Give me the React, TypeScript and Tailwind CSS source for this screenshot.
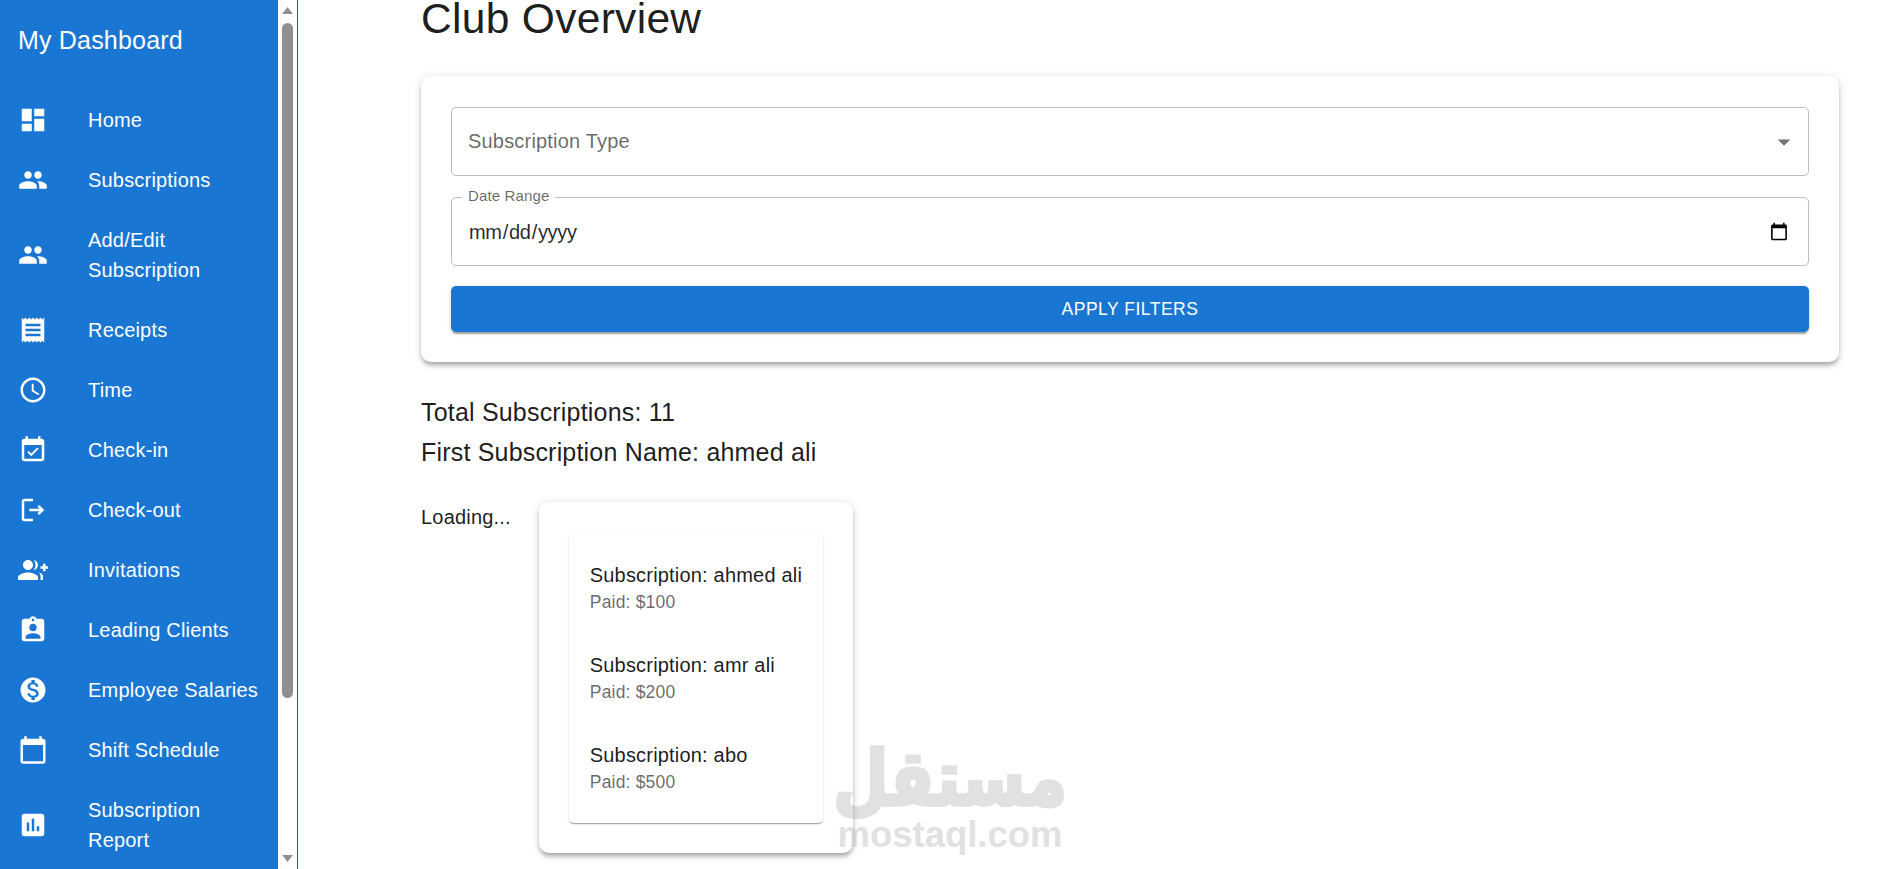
const icons = {
  dashboard: "M3 13h8V3H3v10zm0 8h8v-6H3v6zm10 0h8V11h-8v10zm0-18v6h8V3h-8z",
  people:
    "M16 11c1.66 0 2.99-1.34 2.99-3S17.66 5 16 5c-1.66 0-3 1.34-3 3s1.34 3 3 3zm-8 0c1.66 0 2.99-1.34 2.99-3S9.66 5 8 5C6.34 5 5 6.34 5 8s1.34 3 3 3zm0 2c-2.33 0-7 1.17-7 3.5V19h14v-2.5c0-2.33-4.67-3.5-7-3.5zm8 0c-.29 0-.62.02-.97.05 1.16.84 1.97 1.97 1.97 3.45V19h6v-2.5c0-2.33-4.67-3.5-7-3.5z",
  receipt:
    "M18 17H6v-2h12v2zm0-4H6v-2h12v2zm0-4H6V7h12v2zM3 22l1.5-1.5L6 22l1.5-1.5L9 22l1.5-1.5L12 22l1.5-1.5L15 22l1.5-1.5L18 22l1.5-1.5L21 22V2l-1.5 1.5L18 2l-1.5 1.5L15 2l-1.5 1.5L12 2l-1.5 1.5L9 2 7.5 3.5 6 2 4.5 3.5 3 2v20z",
  time: "M11.99 2C6.47 2 2 6.48 2 12s4.47 10 9.99 10C17.52 22 22 17.52 22 12S17.52 2 11.99 2zM12 20c-4.42 0-8-3.58-8-8s3.58-8 8-8 8 3.58 8 8-3.58 8-8 8zM12.5 7H11v6l5.25 3.15.75-1.23-4.5-2.67z",
  checkin:
    "M16.53 11.06 15.47 10l-4.88 4.88-2.12-2.12-1.06 1.06L10.59 17l5.94-5.94zM19 3h-1V1h-2v2H8V1H6v2H5c-1.11 0-1.99.9-1.99 2L3 19c0 1.1.89 2 2 2h14c1.1 0 2-.9 2-2V5c0-1.1-.9-2-2-2zm0 16H5V8h14v11z",
  checkout:
    "m17 8-1.41 1.41L17.17 11H9v2h8.17l-1.58 1.58L17 16l4-4-4-4zM5 5h7V3H5c-1.1 0-2 .9-2 2v14c0 1.1.9 2 2 2h7v-2H5V5z",
  invite:
    "M22 9V7h-2v2h-2v2h2v2h2v-2h2V9zM8 12c2.21 0 4-1.79 4-4s-1.79-4-4-4-4 1.79-4 4 1.79 4 4 4zm0 2c-2.67 0-8 1.34-8 4v2h16v-2c0-2.66-5.33-4-8-4zM12.51 4.05C13.43 5.11 14 6.49 14 8s-.57 2.89-1.49 3.95C14.47 11.7 16 10.04 16 8s-1.53-3.7-3.49-3.95zM16.53 13.83C17.42 14.66 18 15.7 18 17v3h2v-3c0-1.45-1.59-2.51-3.47-3.17z",
  clients:
    "M19 3h-4.18C14.4 1.84 13.3 1 12 1c-1.3 0-2.4.84-2.82 2H5c-1.1 0-2 .9-2 2v14c0 1.1.9 2 2 2h14c1.1 0 2-.9 2-2V5c0-1.1-.9-2-2-2zm-7 0c.55 0 1 .45 1 1s-.45 1-1 1-1-.45-1-1 .45-1 1-1zm0 4c1.66 0 3 1.34 3 3s-1.34 3-3 3-3-1.34-3-3 1.34-3 3-3zm6 12H6v-1.4c0-2 4-3.1 6-3.1s6 1.1 6 3.1V19z",
  money:
    "M12 2C6.48 2 2 6.48 2 12s4.48 10 10 10 10-4.48 10-10S17.52 2 12 2zm1.41 16.09V20h-2.67v-1.93c-1.71-.36-3.16-1.46-3.27-3.4h1.96c.1 1.05.82 1.87 2.65 1.87 1.96 0 2.4-.98 2.4-1.59 0-.83-.44-1.61-2.67-2.14-2.48-.6-4.18-1.62-4.18-3.67 0-1.72 1.39-2.84 3.11-3.21V4h2.67v1.95c1.86.45 2.79 1.86 2.85 3.39H14.3c-.05-1.11-.64-1.87-2.22-1.87-1.5 0-2.4.68-2.4 1.64 0 .84.65 1.39 2.67 1.91s4.18 1.39 4.18 3.91c-.01 1.83-1.38 2.83-3.12 3.16z",
  calendar:
    "M20 3h-1V1h-2v2H7V1H5v2H4c-1.1 0-2 .9-2 2v16c0 1.1.9 2 2 2h16c1.1 0 2-.9 2-2V5c0-1.1-.9-2-2-2zm0 18H4V8h16v13z",
  report:
    "M19 3H5c-1.1 0-2 .9-2 2v14c0 1.1.9 2 2 2h14c1.1 0 2-.9 2-2V5c0-1.1-.9-2-2-2zM9 17H7v-7h2v7zm4 0h-2V7h2v10zm4 0h-2v-4h2v4z",
};

const navItems = [
  { label: "Home", icon: icons.dashboard },
  { label: "Subscriptions", icon: icons.people },
  { label: "Add/Edit Subscription", icon: icons.people },
  { label: "Receipts", icon: icons.receipt },
  { label: "Time", icon: icons.time },
  { label: "Check-in", icon: icons.checkin },
  { label: "Check-out", icon: icons.checkout },
  { label: "Invitations", icon: icons.invite },
  { label: "Leading Clients", icon: icons.clients },
  { label: "Employee Salaries", icon: icons.money },
  { label: "Shift Schedule", icon: icons.calendar },
  { label: "Subscription Report", icon: icons.report },
];

const payments = [
  { name: "ahmed ali", paid: 100 },
  { name: "amr ali", paid: 200 },
  { name: "abo", paid: 500 },
];

const Sidebar = () => (
  <aside className="flex h-[869px] shrink-0 border-r border-[#2c5c9c]">
    <div className="w-[278px] overflow-hidden bg-[#1976d2] text-white">
      <h6 className="h-[90px] pl-[18px] pt-[22px] text-[25px] leading-[37px] tracking-[0.19px]">My Dashboard</h6>
      <ul>
        {navItems.map((item) => (
          <li key={item.label} className="flex items-center py-[15px] pl-[18px] pr-[15px]">
            <svg viewBox="0 0 24 24" className="h-[30px] w-[30px] shrink-0 fill-white">
              <path d={item.icon} />
            </svg>
            <span className="ml-[40px] text-[20px] leading-[30px] tracking-[0.19px]">{item.label}</span>
          </li>
        ))}
      </ul>
    </div>
    <div className="relative w-[19px] bg-white">
      <svg viewBox="0 0 14 10" className="absolute left-[3px] top-[6px] h-[9px] w-[13px] fill-[#8f8f8f]">
        <path d="M7 1 13 9H1z" />
      </svg>
      <div className="absolute left-[4px] top-[23px] h-[675px] w-[11px] rounded-full bg-[#8f8f8f]" />
      <svg viewBox="0 0 14 10" className="absolute bottom-[6px] left-[3px] h-[9px] w-[13px] fill-[#8f8f8f]">
        <path d="M1 1h12L7 9z" />
      </svg>
    </div>
  </aside>
);

const FilterCard = () => (
  <section className="mt-[39px] rounded-[10px] bg-white px-[30px] pb-[30px] pt-[31px] shadow-[0_4px_4px_-2px_rgba(0,0,0,0.2),0_4px_5px_0_rgba(0,0,0,0.14),0_1px_10px_0_rgba(0,0,0,0.12)]">
    <div className="flex h-[69px] items-center justify-between rounded-[5px] border border-black/25 pl-[16px] pr-[5px]">
      <span className="pb-[2px] text-[20px] tracking-[0.19px] text-black/60">Subscription Type</span>
      <svg viewBox="0 0 24 24" className="mr-[4px] h-[30px] w-[30px] fill-black/55">
        <path d="M7 10l5 5 5-5z" />
      </svg>
    </div>
    <div className="relative mt-[21px] h-[69px] rounded-[5px] border border-black/25">
      <label className="absolute -top-[11px] left-[10px] bg-white px-[6px] text-[15px] leading-[18px] tracking-[0.14px] text-black/60">
        Date Range
      </label>
      <input
        type="date"
        className="h-full w-full bg-transparent pl-[16px] pr-[17px] text-[20px] tracking-[-0.3px] text-black/85 outline-none"
      />
    </div>
    <button className="mt-[20px] h-[46px] w-full rounded-[5px] bg-[#1976d2] text-[17.5px] font-medium uppercase tracking-[0.5px] text-white shadow-[0_4px_1px_-2px_rgba(0,0,0,0.2),0_2px_2px_0_rgba(0,0,0,0.14),0_1px_5px_0_rgba(0,0,0,0.12)]">
      Apply Filters
    </button>
  </section>
);

const App = () => (
  <div className="relative flex h-[869px] overflow-hidden bg-white font-['Liberation_Sans',Arial,sans-serif] text-black/90">
    <Sidebar />
    <main className="min-w-0 flex-1 pl-[123px] pr-[60px]">
      <h4 className="text-[42.5px] leading-[37px] tracking-[0.31px]">Club Overview</h4>
      <FilterCard />
      <div className="mt-[30px] text-[25px] leading-[40px] tracking-[0.19px]">
        <p>Total Subscriptions: 11</p>
        <p>First Subscription Name: ahmed ali</p>
      </div>
      <div className="mt-[30px] flex items-start gap-[28.5px]">
        <p className="text-[20px] leading-[30px] tracking-[0.19px]">Loading...</p>
        <div className="rounded-[10px] bg-white p-[30px] shadow-[0_4px_4px_-2px_rgba(0,0,0,0.2),0_4px_5px_0_rgba(0,0,0,0.14),0_1px_10px_0_rgba(0,0,0,0.12)]">
          <ul className="flex flex-col gap-[35px] rounded-[5px] bg-white px-[20.5px] py-[28px] shadow-[0_2px_1px_-1px_rgba(0,0,0,0.2),0_1px_1px_0_rgba(0,0,0,0.14),0_1px_3px_0_rgba(0,0,0,0.12)]">
            {payments.map((p) => (
              <li key={p.name}>
                <p className="text-[20px] leading-[30px] tracking-[0.19px]">Subscription: {p.name}</p>
                <p className="text-[17.5px] leading-[25px] tracking-[0.19px] text-black/60">Paid: ${p.paid}</p>
              </li>
            ))}
          </ul>
        </div>
      </div>
    </main>
    {/* watermark */}
    <div className="pointer-events-none absolute left-[835px] top-[744px] flex w-[230px] flex-col items-center text-[#8a8a8a] opacity-25">
      <span
        dir="rtl"
        className="scale-y-[1.2] font-['DejaVu_Sans',sans-serif] text-[64px] font-bold leading-[70px] [-webkit-text-stroke:3px_#8a8a8a]"
      >
        مستقل
      </span>
      <span className="text-[36.5px] font-bold leading-[42px]">mostaql.com</span>
    </div>
  </div>
);

export default App;
